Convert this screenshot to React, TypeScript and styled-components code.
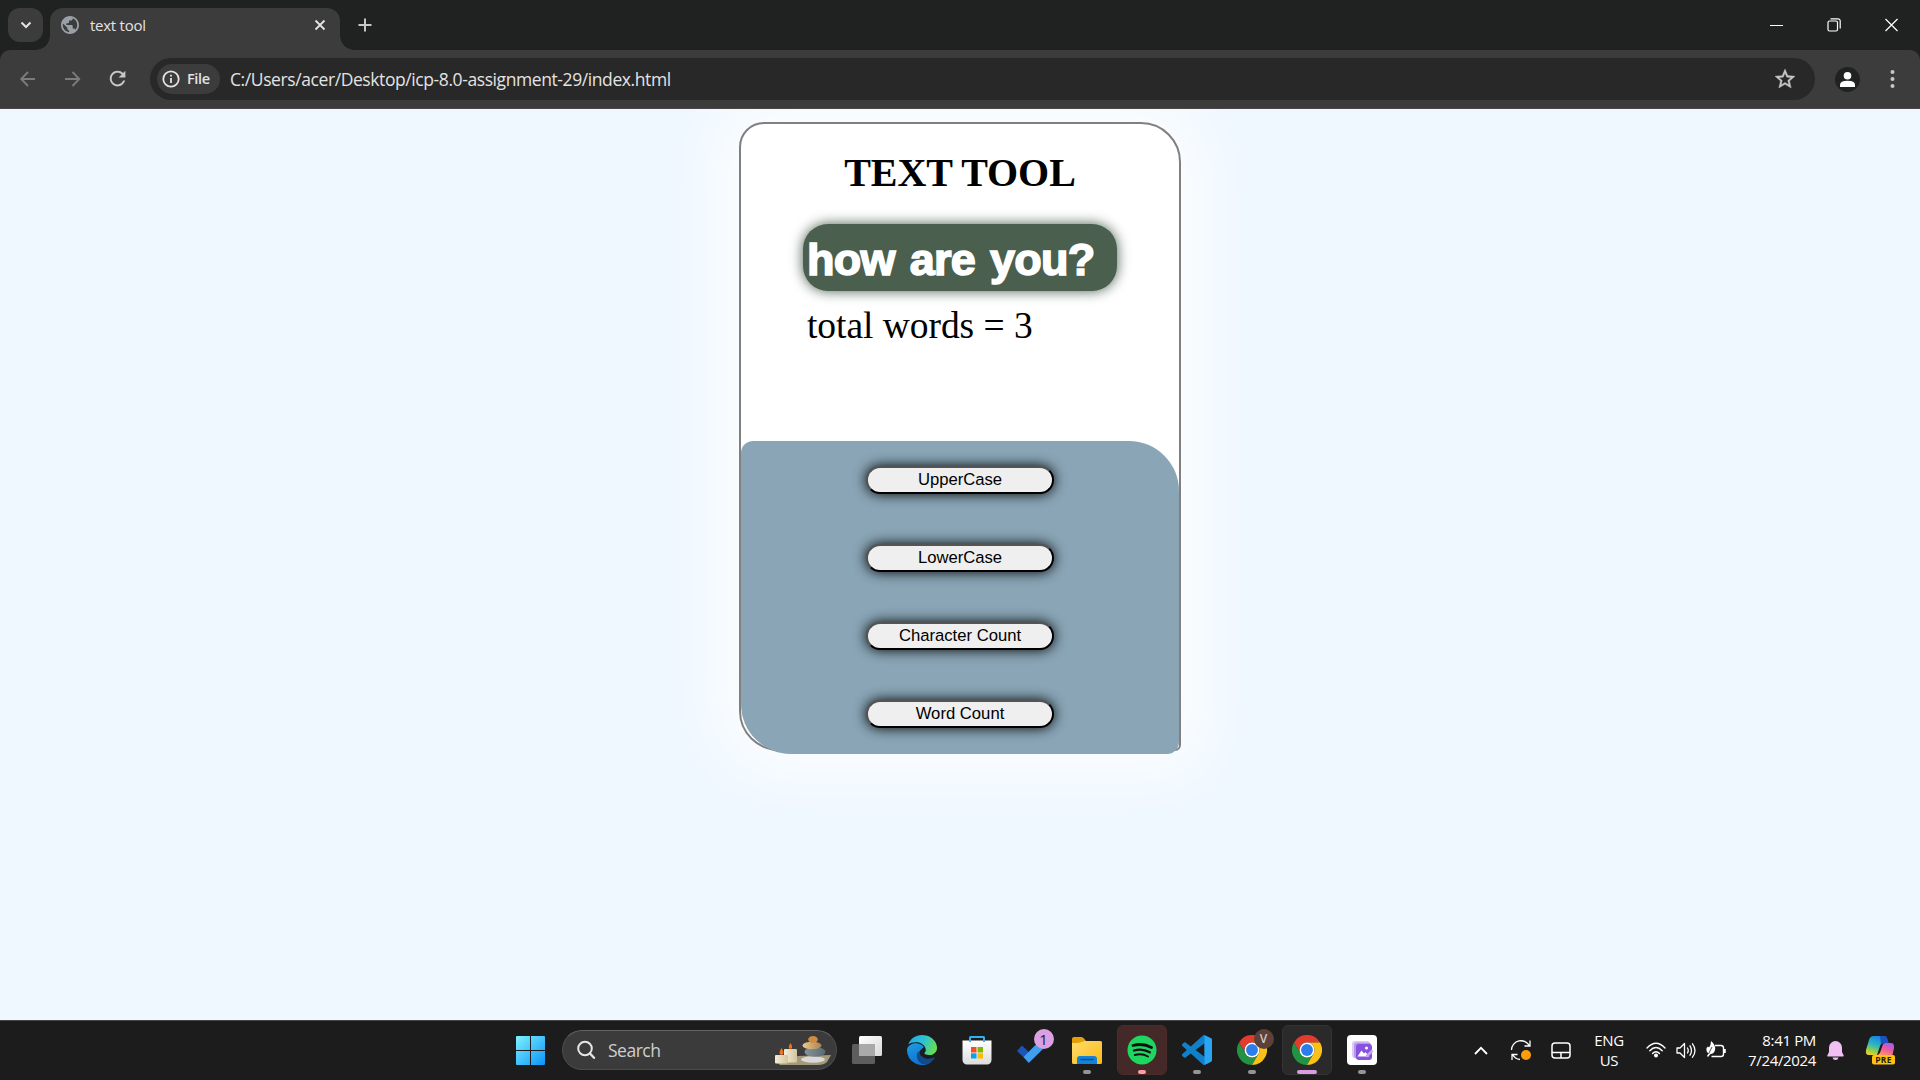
import React from "react";
import styled, { createGlobalStyle } from "styled-components";

const UI_FONT = '"Open Sans", "Noto Sans", sans-serif';

const GlobalStyle = createGlobalStyle`
  * { box-sizing: border-box; }
  body { margin: 0; overflow: hidden; background: #1c1c1c; }
`;

const Screen = styled.div`
  width: 1920px;
  height: 1080px;
  display: flex;
  flex-direction: column;
  overflow: hidden;
  font-family: ${UI_FONT};
`;

/* ---------- Browser frame ---------- */

const TabStrip = styled.div`
  height: 50px;
  flex: none;
  display: flex;
  align-items: flex-start;
  background: #202221;
  padding: 8px 0 0 8px;
`;

const TabSearch = styled.button`
  width: 35px;
  height: 34px;
  padding: 0;
  border: 0;
  border-radius: 12px;
  background: #3c3c3c;
  display: grid;
  place-items: center;
  margin-right: 7px;
`;

const Tab = styled.div`
  position: relative;
  width: 290px;
  height: 42px;
  border-radius: 13px 13px 0 0;
  background: #3c3c3c;
  display: flex;
  align-items: center;
  padding: 0 14px 8px 11px;
  &::before,
  &::after {
    content: "";
    position: absolute;
    bottom: 0;
    width: 14px;
    height: 14px;
  }
  &::before {
    left: -14px;
    background: radial-gradient(circle at 0 0, transparent 13.5px, #3c3c3c 14px);
  }
  &::after {
    right: -14px;
    background: radial-gradient(circle at 100% 0, transparent 13.5px, #3c3c3c 14px);
  }
`;

const TabTitle = styled.span`
  flex: 1;
  margin-left: 11px;
  font-size: 15px;
  line-height: 20px;
  letter-spacing: -0.25px;
  color: #e3e3e3;
`;

const NewTab = styled.div`
  width: 20px;
  height: 34px;
  margin-left: 15px;
  display: grid;
  place-items: center;
`;

const WindowControls = styled.div`
  margin-left: auto;
  display: flex;
  height: 33px;
  align-items: center;
  gap: 44px;
  padding-right: 22px;
  svg { display: block; }
`;

const Toolbar = styled.div`
  height: 59px;
  flex: none;
  display: flex;
  align-items: center;
  background: linear-gradient(#202221 0 12px, transparent 12px);
  background-color: #3c3c3c;
`;

const ToolbarFace = styled.div`
  flex: 1;
  height: 59px;
  display: flex;
  align-items: center;
  border-radius: 10px 10px 0 0;
  background: #3c3c3c;
  border-bottom: 1px solid #4c4644;
  padding: 0 19px 0 17px;
`;

const NavButtons = styled.div`
  width: 133px;
  display: flex;
  gap: 23px;
`;

const NavIcon = styled.svg`
  width: 22px;
  height: 22px;
  display: block;
`;

const AddressBar = styled.div`
  width: 1665px;
  height: 42px;
  border-radius: 21px;
  background: #282828;
  display: flex;
  align-items: center;
  padding: 0 19px 0 7px;
`;

const FileChip = styled.div`
  width: 63px;
  height: 30px;
  border-radius: 15px;
  background: #3c3c3c;
  display: flex;
  align-items: center;
  gap: 7px;
  padding: 0 0 1px 5px;
  font-size: 14.5px;
  font-weight: 600;
  letter-spacing: -0.35px;
  color: #e3e3e3;
`;

const Url = styled.span`
  flex: 1;
  margin-left: 10px;
  font-size: 17.5px;
  line-height: 24px;
  letter-spacing: -0.41px;
  color: #e3e3e3;
  white-space: nowrap;
`;

const Profile = styled.svg`
  width: 25px;
  height: 25px;
  margin: 0 30px 0 20px;
`;

/* ---------- Page ---------- */

const Page = styled.main`
  height: 911px;
  flex: none;
  background: #f0f8ff;
  padding-top: 13px;
  overflow: hidden;
`;

const Card = styled.section`
  width: 442px;
  height: 629px;
  margin: 0 auto;
  background: #fff;
  border: 2px solid #808080;
  border-radius: 25px 40px 6px 40px;
  box-shadow: 0 0 62px 12px #fff;
  display: flex;
  flex-direction: column;
  align-items: center;
`;

const Heading = styled.h1`
  margin: 26px 0 0;
  font: bold 40px/46px "Liberation Serif", serif;
  letter-spacing: -0.1px;
  color: #000;
`;

const Field = styled.div`
  width: 314px;
  height: 67px;
  margin-top: 28px;
  flex: none;
  border-radius: 25px;
  background: #4a5f4e;
  box-shadow: 0 0 12.5px #4a5f4e;
  padding-left: 4px;
  font: bold 45px/71px "Liberation Sans", sans-serif;
  letter-spacing: -0.7px;
  word-spacing: 3px;
  -webkit-text-stroke: 1.6px #fff;
  color: #fff;
  white-space: nowrap;
`;

const Result = styled.div`
  width: 306px;
  height: 150px;
  flex: none;
  padding-top: 13px;
  font: 37.5px/43px "Liberation Serif", serif;
  letter-spacing: -0.05px;
  color: #000;
`;

const ButtonPanel = styled.div`
  width: 438px;
  height: 313px;
  flex: none;
  border-radius: 12px 50px 12px 50px;
  background: #89a5b6;
  display: flex;
  flex-direction: column;
  align-items: center;
  gap: 50.1px;
  padding-top: 25px;
`;

const ActionButton = styled.button`
  width: 188px;
  height: 28px;
  flex: none;
  padding: 0;
  border: 2px outset #000;
  border-radius: 14px;
  background: #efefef;
  box-shadow: 0 0 12.5px #000;
  font: 16.67px/22px "Liberation Sans", Arial, sans-serif;
  color: #000;
`;

/* ---------- Taskbar ---------- */

const Taskbar = styled.footer`
  height: 60px;
  flex: none;
  display: flex;
  align-items: flex-start;
  background: #1c1c1c;
  border-top: 1px solid #454747;
  padding-left: 503px;
`;

const AppCell = styled.div`
  position: relative;
  width: 55px;
  height: 58px;
  flex: none;
  display: grid;
  place-items: center;
  svg { display: block; }
`;

const AppTile = styled.div<{ $bg?: string; $edge?: string }>`
  width: 50px;
  height: 50px;
  border-radius: 6px;
  border: 1px solid ${(p) => p.$edge ?? "transparent"};
  background: ${(p) => p.$bg ?? "transparent"};
  display: grid;
  place-items: center;
`;

const Indicator = styled.span<{ $w: number; $color: string }>`
  position: absolute;
  left: 50%;
  bottom: 5px;
  width: ${(p) => p.$w}px;
  height: 4px;
  margin-left: ${(p) => -p.$w / 2}px;
  border-radius: 2px;
  background: ${(p) => p.$color};
`;

const Badge = styled.span<{ $bg: string; $fg: string; $weight: number; $size: number }>`
  position: absolute;
  right: 6px;
  top: 8px;
  width: 20px;
  height: 20px;
  border-radius: 50%;
  background: ${(p) => p.$bg};
  color: ${(p) => p.$fg};
  font: ${(p) => p.$weight} ${(p) => p.$size}px/20px ${UI_FONT};
  text-align: center;
`;

const SearchBox = styled.div`
  width: 275px;
  height: 40px;
  margin: 9px 2.5px 0 4px;
  border-radius: 20px;
  background: #3b3b3b;
  border: 1px solid #4c4c4c;
  border-top-color: #636363;
  display: flex;
  align-items: center;
  padding: 0 4px 0 13px;
  overflow: hidden;
  color: #cfcfcf;
  font-size: 17.5px;
  letter-spacing: -0.5px;
`;

const SearchLabel = styled.span`
  flex: 1;
  margin-left: 12px;
  line-height: 24px;
`;

const Tray = styled.div`
  margin-left: auto;
  display: flex;
  align-items: center;
  height: 58px;
  padding-right: 14px;
  svg { display: block; flex: none; }
`;

const TraySlot = styled.div<{ $w: number }>`
  width: ${(p) => p.$w}px;
  flex: none;
  display: grid;
  place-items: center;
`;

const TwoLines = styled.div<{ $w: number; $align: string; $ls: number }>`
  width: ${(p) => p.$w}px;
  text-align: ${(p) => p.$align};
  font-size: 15px;
  line-height: 20px;
  letter-spacing: ${(p) => p.$ls}px;
  color: #fff;
  white-space: nowrap;
`;

/* ---------- App icons ---------- */

const StartIcon = () => (
  <svg width="29" height="29" viewBox="0 0 29 29">
    <defs>
      <linearGradient id="win" x1="0" y1="0" x2="1" y2="1">
        <stop offset="0" stopColor="#7df2ff" />
        <stop offset="1" stopColor="#0a93f8" />
      </linearGradient>
    </defs>
    <path fill="url(#win)" d="M1 0H14V14H0V1a1 1 0 0 1 1-1zM15 0H28a1 1 0 0 1 1 1V14H15zM0 15H14V29H1a1 1 0 0 1-1-1zM15 15H29V28a1 1 0 0 1-1 1H15z" />
  </svg>
);

const SearchArt = () => (
  <svg width="58" height="34" viewBox="0 0 58 34">
    <defs>
      <linearGradient id="wax" x1="0" x2="1">
        <stop offset="0" stopColor="#f5ecd6" />
        <stop offset="1" stopColor="#d3c49f" />
      </linearGradient>
      <linearGradient id="stone" x1="0" x2="1">
        <stop offset="0" stopColor="#ecc98d" />
        <stop offset="1" stopColor="#a68352" />
      </linearGradient>
      <linearGradient id="slate" x1="0" x2="1">
        <stop offset="0" stopColor="#82949a" />
        <stop offset="1" stopColor="#5b6a70" />
      </linearGradient>
    </defs>
    <path d="M3 29 L24 23 L57 22 L53 29 Q50 32 44 32 L6 32 Z" fill="#a39a7a" />
    <rect x="10" y="16" width="13" height="13.500" rx="1" fill="url(#wax)" />
    <rect x="1" y="22" width="13" height="8.500" rx="1" fill="url(#wax)" />
    <path d="M16.500 10 q-3.500 5 0 6 q3.500-1 0-6zM7.500 15 q-4 6 0 7 q4-1 0-7z" fill="#f0711f" />
    <ellipse cx="39" cy="26.500" rx="12" ry="3.300" fill="#d8d8da" />
    <ellipse cx="41" cy="19" rx="10.500" ry="4.800" fill="url(#slate)" />
    <ellipse cx="38" cy="12.500" rx="9.500" ry="3.800" fill="url(#stone)" />
    <ellipse cx="39" cy="6.500" rx="4.800" ry="3.500" fill="#cf8b3f" />
  </svg>
);

const TaskViewIcon = () => (
  <svg width="30" height="28" viewBox="0 0 30 28">
    <defs>
      <linearGradient id="tv" x1="0" y1="0" x2="1" y2="1">
        <stop offset="0" stopColor="#fff" />
        <stop offset="1" stopColor="#d9d9d9" />
      </linearGradient>
    </defs>
    <rect x="0" y="8" width="23" height="20" rx="1.500" fill="#5d5d5d" />
    <rect x="7" y="0" width="23" height="20" rx="1.500" fill="url(#tv)" />
    <path d="M7 8H23V20H7z" fill="#a9a9a9" />
  </svg>
);

const EdgeIcon = () => (
  <svg width="30" height="30" viewBox="0 0 24 24">
    <defs>
      <linearGradient id="e1" x1="0" y1="0.3" x2="1" y2="0.6">
        <stop offset="0" stopColor="#27a8ea" />
        <stop offset="0.5" stopColor="#2cc3d0" />
        <stop offset="1" stopColor="#6be04c" />
      </linearGradient>
      <linearGradient id="e2" x1="0" y1="0" x2="0.5" y2="1">
        <stop offset="0" stopColor="#1e9de3" />
        <stop offset="1" stopColor="#0f6fd0" />
      </linearGradient>
    </defs>
    <path fill="url(#e2)" d="M.1 11C2 6 10 5 13.500 9.500L10 13C9 18 15 22 20 20.900A12 12 0 0 1 0 12z" />
    <path fill="#114a8b" d="M21.860 17.860q.14 0 .25.12.1.13.1.25t-.11.33l-.32.46-.43.53-.44.5q-.26.25-.38.37l-.22.23q-.58.53-1.340 1.040-.76.51-1.600.91-.86.4-1.740.64t-1.670.24q-.9 0-1.690-.28-.8-.28-1.480-.78-.68-.5-1.220-1.170-.53-.66-.92-1.440-.38-.77-.58-1.600-.2-.83-.2-1.670 0-1 .32-1.960.33-.97.87-1.800.14.95.55 1.770.41.82 1.020 1.500.6.68 1.380 1.210.78.54 1.640.9.86.36 1.770.56.92.2 1.800.2 1.120 0 2.180-.24 1.060-.23 2.060-.72l.2-.1.2-.05z" />
    <path fill="url(#e1)" d="M11.960.06q1.700 0 3.330.39 1.630.38 3.070 1.150 1.430.77 2.620 1.930 1.180 1.160 1.980 2.700.49.94.76 1.960.28 1 .28 2.080 0 .89-.23 1.700-.24.8-.69 1.480-.45.68-1.100 1.220-.64.53-1.450.88-.54.24-1.110.36-.58.13-1.160.13-.42 0-.97-.03-.54-.03-1.100-.12-.55-.1-1.050-.28-.5-.19-.84-.5-.12-.09-.23-.24-.1-.16-.1-.33 0-.15.16-.35.16-.2.35-.5.2-.28.36-.68.16-.4.16-.95 0-1.060-.4-1.960-.4-.91-1.060-1.640-.66-.74-1.520-1.280-.86-.55-1.790-.89-.84-.3-1.720-.44-.87-.14-1.760-.14-1.550 0-3.060.45T.94 7.550q.71-1.740 1.810-3.130 1.100-1.380 2.520-2.350Q6.680 1.100 8.370.58q1.700-.52 3.580-.52Z" />
  </svg>
);

const StoreIcon = () => (
  <svg width="30" height="30" viewBox="0 0 30 30">
    <defs>
      <linearGradient id="bag" x1="0" y1="0" x2="0" y2="1">
        <stop offset="0" stopColor="#fff" />
        <stop offset="1" stopColor="#dcdcdc" />
      </linearGradient>
    </defs>
    <path d="M0.500 5.500H29.500V25a4.500 4.500 0 0 1-4.500 4.500H5A4.500 4.500 0 0 1 .5 25z" fill="url(#bag)" />
    <path d="M8 7V2.500Q8 2 8.500 2H21.500Q22 2 22 2.500V7" fill="none" stroke="#2db4ee" strokeWidth="2" />
    <path fill="#f25022" d="M9 12h5.500v5.500H9z" />
    <path fill="#7fba00" d="M15.500 12H21v5.500h-5.500z" />
    <path fill="#00a4ef" d="M9 18.300h5.500V23.500H9z" />
    <path fill="#ffb900" d="M15.500 18.300H21V23.500h-5.500z" />
  </svg>
);

const TodoIcon = () => (
  <svg width="30" height="30" viewBox="0 0 30 30">
    <path d="M0 16 5 10.500 15.500 20.500 11.500 27z" fill="#1b55b8" />
    <path d="M6.500 22 24 4.500 30 10 11.800 28z" fill="#3f9fee" />
  </svg>
);

const ExplorerIcon = () => (
  <svg width="30" height="27" viewBox="0 0 30 27">
    <defs>
      <linearGradient id="fold" x1="0" y1="0" x2="1" y2="1">
        <stop offset="0" stopColor="#ffdd6e" />
        <stop offset="1" stopColor="#fbb915" />
      </linearGradient>
    </defs>
    <path d="M0 2Q0 0 2 0H9.500Q11 0 12 1.500L14 4V9H0z" fill="#e2a006" />
    <path d="M0 6Q7 6.200 9.500 5 12 4 14 4H28.500Q30 4 30 5.500V25.500Q30 27 28.500 27H1.500Q0 27 0 25.500z" fill="url(#fold)" />
    <path d="M5 27V22a3 3 0 0 1 3-3H22a3 3 0 0 1 3 3V27z" fill="#1482d8" />
    <path d="M9 22.500H21" stroke="#0b4d91" strokeWidth="1.500" strokeLinecap="round" />
  </svg>
);

const SpotifyIcon = () => (
  <svg width="30" height="30" viewBox="0 0 30 30">
    <circle cx="15" cy="15" r="14.500" fill="#1ed760" />
    <g fill="none" stroke="#101010" strokeLinecap="round">
      <path d="M6 10.500Q16 7.800 24.500 12.500" strokeWidth="2.800" />
      <path d="M7 15.500Q15.500 13 22.800 17.300" strokeWidth="2.300" />
      <path d="M7.800 20Q15 18 21 21.500" strokeWidth="1.900" />
    </g>
  </svg>
);

const CodeIcon = () => (
  <svg width="30" height="30" viewBox="0 0 24 24">
    <path fill="#1080c9" d="M23.150 2.587L18.210.21a1.494 1.494 0 0 0-1.705.29l-9.460 8.630-4.120-3.128a.999.999 0 0 0-1.276.057L.327 7.261A1 1 0 0 0 .326 8.740L3.899 12 .326 15.260a1 1 0 0 0 .001 1.479L1.650 17.940a.999.999 0 0 0 1.276.057l4.120-3.128 9.460 8.630a1.492 1.492 0 0 0 1.704.29l4.942-2.377A1.500 1.500 0 0 0 24 20.060V3.939a1.500 1.500 0 0 0-.85-1.352zm-5.146 14.861L10.826 12l7.178-5.448v10.896z" />
    <path fill="#2aa5f2" d="M18 .1 23.150 2.587A1.500 1.500 0 0 1 24 3.939V20.060a1.500 1.500 0 0 1-.85 1.352L18 23.900z" />
  </svg>
);

const ChromeIcon = () => (
  <svg width="30" height="30" viewBox="0 0 48 48">
    <path fill="#e33b2e" d="M24 12H44.800A24 24 0 0 0 3.200 12L13.600 30A12 12 0 0 1 24 12z" />
    <path fill="#229342" d="M13.600 30 3.200 12A24 24 0 0 0 24 48L34.400 30A12 12 0 0 1 13.600 30z" />
    <path fill="#fbc116" d="M34.400 30 24 48A24 24 0 0 0 44.800 12H24A12 12 0 0 1 34.400 30z" />
    <circle cx="24" cy="24" r="12" fill="#fff" />
    <circle cx="24" cy="24" r="9.500" fill="#2b7de9" />
  </svg>
);

const PhotoIcon = () => (
  <svg width="30" height="30" viewBox="0 0 30 30">
    <rect width="30" height="30" rx="4" fill="#fff" />
    <rect x="5" y="6" width="18" height="17" rx="3" fill="#dccbf5" />
    <rect x="7" y="7.500" width="17" height="16" rx="3" fill="#b796ea" />
    <rect x="9" y="9" width="16" height="16" rx="3" fill="#8753dc" />
    <path d="M10.500 21.500 14.500 15.500 17 18.500 18.500 17 22 21.500z" fill="#fff" />
    <circle cx="19.500" cy="13" r="1.500" fill="#fff" />
    <path d="M19.500 21.500 25.500 15.500" stroke="#c6a6f3" strokeWidth="2.500" />
  </svg>
);

const CopilotIcon = () => (
  <svg width="30" height="30" viewBox="0 0 30 30">
    <defs>
      <linearGradient id="cpa" x1="0.6" y1="0" x2="0.2" y2="1">
        <stop offset="0" stopColor="#1a7ee6" />
        <stop offset="0.45" stopColor="#25b5c4" />
        <stop offset="0.75" stopColor="#8ccb5a" />
        <stop offset="1" stopColor="#f2d21e" />
      </linearGradient>
      <linearGradient id="cpb" x1="0.7" y1="0" x2="0.2" y2="1">
        <stop offset="0" stopColor="#a45cf0" />
        <stop offset="0.5" stopColor="#ee5c9a" />
        <stop offset="1" stopColor="#ff9a5a" />
      </linearGradient>
    </defs>
    <path d="M9 1H19Q22 1 22.500 5L23.500 8H19Q16 8 15 11L12 20H4Q0 20 1 15L4 5Q5 1 9 1z" fill="url(#cpa)" />
    <path d="M15 1H19Q22 1 22.500 5L23.500 8H19Q17 8 16 9.500z" fill="#1c50c4" />
    <path d="M20 8H26Q29.500 8 29 13L27.500 20H12.500Q15 19 16 15L17.500 10.500Q18 8 20 8z" fill="url(#cpb)" />
    <rect x="7" y="20" width="23" height="9.500" rx="2" fill="#ffc20e" />
    <text x="18.500" y="27.800" textAnchor="middle" fontFamily="Open Sans, sans-serif" fontWeight="700" fontSize="8.500" letterSpacing="0.3" fill="#1c1c1c">PRE</text>
  </svg>
);

/* ---------- Data ---------- */

type AppEntry = {
  name: string;
  icon: React.ReactNode;
  bg?: string;
  edge?: string;
  dot?: { w: number; color: string };
  badge?: { text: string; bg: string; fg: string; weight: number; size: number };
};

const GREY_DOT = { w: 8, color: "#949494" };

const apps: AppEntry[] = [
  { name: "taskview", icon: <TaskViewIcon /> },
  { name: "edge", icon: <EdgeIcon /> },
  { name: "store", icon: <StoreIcon /> },
  { name: "todo", icon: <TodoIcon />, badge: { text: "1", bg: "#dc9fe2", fg: "#2a1c2c", weight: 400, size: 15 } },
  { name: "explorer", icon: <ExplorerIcon />, dot: GREY_DOT },
  { name: "spotify", icon: <SpotifyIcon />, bg: "#452929", edge: "#4c2b2b", dot: { w: 8, color: "#ff9ca4" } },
  { name: "code", icon: <CodeIcon />, dot: GREY_DOT },
  { name: "chrome-v", icon: <ChromeIcon />, dot: GREY_DOT, badge: { text: "V", bg: "#5d4037", fg: "#d4c9c5", weight: 600, size: 12 } },
  { name: "chrome", icon: <ChromeIcon />, bg: "#2a2a2a", edge: "#343434", dot: { w: 20, color: "#d99ce0" } },
  { name: "photo", icon: <PhotoIcon />, dot: GREY_DOT },
];

const actions = ["UpperCase", "LowerCase", "Character Count", "Word Count"];

export default function App() {
  return (
    <Screen>
      <GlobalStyle />
      <TabStrip>
        <TabSearch>
          <svg width="12" height="8" viewBox="0 0 12 8"><path d="M1.500 1.500 6 6 10.500 1.500" fill="none" stroke="#e3e3e3" strokeWidth="2" /></svg>
        </TabSearch>
        <Tab>
          <svg width="18" height="18" viewBox="2 2 20 20" fill="#9aa0a8"><path d="M12 2C6.480 2 2 6.480 2 12s4.480 10 10 10 10-4.480 10-10S17.520 2 12 2zm-1 17.930c-3.950-.49-7-3.850-7-7.930 0-.62.08-1.210.21-1.790L9 15v1c0 1.100.9 2 2 2v1.930zm6.900-2.540c-.26-.81-1-1.390-1.900-1.390h-1v-3c0-.55-.45-1-1-1H8v-2h2c.55 0 1-.45 1-1V7h2c1.100 0 2-.9 2-2v-.41c2.930 1.190 5 4.060 5 7.410 0 2.080-.8 3.970-2.100 5.390z" /></svg>
          <TabTitle>text tool</TabTitle>
          <svg width="12" height="12" viewBox="0 0 12 12"><path d="M1.500 1.500 10.500 10.500M10.500 1.500 1.500 10.500" stroke="#e3e3e3" strokeWidth="1.800" /></svg>
        </Tab>
        <NewTab>
          <svg width="14" height="14" viewBox="0 0 14 14"><path d="M7 .5V13.500M.5 7H13.500" stroke="#c7c7c7" strokeWidth="2" /></svg>
        </NewTab>
        <WindowControls>
          <svg width="13" height="14" viewBox="0 0 13 14"><path d="M0 7.500H13" stroke="#fff" /></svg>
          <svg width="14" height="14" viewBox="0 0 14 14" fill="none" stroke="#fff"><rect x="1" y="3" width="9.500" height="10" rx="1.500" strokeWidth="1.200" /><path d="M3.500 .8H11a2.200 2.200 0 0 1 2.200 2.200V10.500" strokeWidth="1.200" /></svg>
          <svg width="13" height="14" viewBox="0 0 13 14"><path d="M.5 1 12.500 13M12.500 1 .5 13" stroke="#fff" strokeWidth="1.200" /></svg>
        </WindowControls>
      </TabStrip>

      <Toolbar>
        <ToolbarFace>
          <NavButtons>
            <NavIcon viewBox="0 0 22 22" fill="none" stroke="#7c7c7c" strokeWidth="1.800"><path d="M18 11H4.500M11 4 4.200 11 11 18" /></NavIcon>
            <NavIcon viewBox="0 0 22 22" fill="none" stroke="#7c7c7c" strokeWidth="1.800"><path d="M3 11H17M10.500 4 17.300 11 10.500 18" /></NavIcon>
            <NavIcon viewBox="1.200 1.200 22.500 22.500" fill="#c7c7c7"><path d="M17.650 6.350C16.200 4.900 14.210 4 12 4c-4.420 0-7.990 3.580-7.990 8s3.570 8 7.990 8c3.730 0 6.840-2.550 7.730-6h-2.080c-.82 2.330-3.040 4-5.650 4-3.310 0-6-2.690-6-6s2.690-6 6-6c1.660 0 3.140.69 4.220 1.780L13 11h7V4l-2.350 2.350z" /></NavIcon>
          </NavButtons>
          <AddressBar>
            <FileChip>
              <svg width="18" height="18" viewBox="0 0 18 18"><circle cx="9" cy="9" r="7.700" fill="none" stroke="#e3e3e3" strokeWidth="1.800" /><path d="M9 8V13M9 4.800V6.600" stroke="#e3e3e3" strokeWidth="1.800" /></svg>
              File
            </FileChip>
            <Url>C:/Users/acer/Desktop/icp-8.0-assignment-29/index.html</Url>
            <svg width="22" height="22" viewBox="1 1 22 22" fill="#c7c7c7" stroke="#c7c7c7" strokeWidth="0.4"><path d="M22 9.240l-7.190-.62L12 2 9.190 8.630 2 9.240l5.460 4.730L5.820 21 12 17.270 18.180 21l-1.630-7.030L22 9.240zM12 15.400l-3.760 2.270 1-4.280-3.320-2.880 4.380-.38L12 6.100l1.710 4.040 4.380.38-3.320 2.880 1 4.280L12 15.400z" /></svg>
          </AddressBar>
          <Profile viewBox="0 0 25 25">
            <circle cx="12.500" cy="12.500" r="12.500" fill="#202221" />
            <circle cx="12.500" cy="8.700" r="3.800" fill="#fff" />
            <path d="M5 20V18Q5 13.800 12.500 13.800T20 18V20z" fill="#fff" />
          </Profile>
          <svg width="5" height="20" viewBox="0 0 5 20" fill="#c7c7c7"><circle cx="2.500" cy="3" r="2" /><circle cx="2.500" cy="10" r="2" /><circle cx="2.500" cy="17" r="2" /></svg>
        </ToolbarFace>
      </Toolbar>

      <Page>
        <Card>
          <Heading>TEXT TOOL</Heading>
          <Field>how are you?</Field>
          <Result>total words = 3</Result>
          <ButtonPanel>
            {actions.map((label) => (
              <ActionButton key={label}>{label}</ActionButton>
            ))}
          </ButtonPanel>
        </Card>
      </Page>

      <Taskbar>
        <AppCell><StartIcon /></AppCell>
        <SearchBox>
          <svg width="20" height="20" viewBox="0 0 20 20" fill="none" stroke="#e6e6e6" strokeLinecap="round"><circle cx="9" cy="8.500" r="6.800" strokeWidth="2" /><path d="M14 13.500 18 17.800" strokeWidth="2.400" /></svg>
          <SearchLabel>Search</SearchLabel>
          <SearchArt />
        </SearchBox>
        {apps.map((app) => (
          <AppCell key={app.name}>
            <AppTile $bg={app.bg} $edge={app.edge}>{app.icon}</AppTile>
            {app.dot && <Indicator $w={app.dot.w} $color={app.dot.color} />}
            {app.badge && (
              <Badge $bg={app.badge.bg} $fg={app.badge.fg} $weight={app.badge.weight} $size={app.badge.size}>
                {app.badge.text}
              </Badge>
            )}
          </AppCell>
        ))}
        <Tray>
          <TraySlot $w={40}>
            <svg width="14" height="9" viewBox="0 0 14 9"><path d="M1 8 7 1.800 13 8" fill="none" stroke="#fff" strokeWidth="1.800" /></svg>
          </TraySlot>
          <TraySlot $w={40}>
            <svg width="22" height="22" viewBox="0 0 22 22" fill="none" stroke="#fff" strokeWidth="1.300">
              <path d="M1.500 11A9.500 9.500 0 0 1 19.500 7M20 1.500V7H14.500M10 20.500Q5 20 2.500 15.500M2 21V15.500H7.500" />
              <circle cx="16" cy="16" r="5" fill="#ff9d0a" stroke="none" />
            </svg>
          </TraySlot>
          <TraySlot $w={39}>
            <svg width="20" height="17" viewBox="0 0 20 17" fill="none" stroke="#fff" strokeWidth="1.500"><rect x="1" y="1" width="18" height="15" rx="3" /><path d="M1 10.500H19M10 10.500V16" /></svg>
          </TraySlot>
          <TwoLines $w={58} $align="center" $ls={-0.3}>ENG<br />US</TwoLines>
          <TraySlot $w={36}>
            <svg width="20" height="16" viewBox="0 0 20 16" fill="none" stroke="#fff" strokeWidth="1.400" strokeLinecap="round">
              <path d="M1 6Q10-3.500 19 6M3.800 8.800Q10 2.300 16.200 8.800M6.500 11.500Q10 8 13.500 11.500" />
              <circle cx="10" cy="13.500" r="1.300" fill="#fff" />
            </svg>
          </TraySlot>
          <TraySlot $w={24}>
            <svg width="20" height="17" viewBox="0 0 20 17" fill="none" stroke="#fff" strokeWidth="1.300" strokeLinecap="round" strokeLinejoin="round">
              <path d="M1 6H4L8.500 1.500V15.500L4 11H1zM11.500 6Q13 8.500 11.500 11M14 3.800Q17 8.500 14 13.200M16.500 1.800Q21.500 8.500 16.500 15.200" />
            </svg>
          </TraySlot>
          <TraySlot $w={36}>
            <svg width="20" height="18" viewBox="0 0 20 18">
              <path d="M9 4.500H15a2.500 2.500 0 0 1 2.500 2.500V13A2.500 2.500 0 0 1 15 15.500H5.500" fill="none" stroke="#fff" strokeWidth="1.400" />
              <path d="M18 8H19.800V12H18z" fill="#fff" />
              <path d="M5 0Q10 4 9 9 8 13 4.500 13L2 16 1 15 2.500 12.500Q0 11 .5 7L2 5.500 3 6.500Q5 4 5 0z" fill="#fff" />
              <path d="M2.500 13 6 6" stroke="#1c1c1c" strokeWidth="0.800" />
            </svg>
          </TraySlot>
          <TwoLines $w={82} $align="right" $ls={-0.35}>8:41 PM<br />7/24/2024</TwoLines>
          <TraySlot $w={38}>
            <svg width="17" height="19" viewBox="0 0 17 19" fill="#f0bff4"><path d="M8.500 0A6.500 6.500 0 0 1 15 6.500V11L16.700 14.500Q17 15.500 16 15.500H1Q0 15.500 .3 14.500L2 11V6.500A6.500 6.500 0 0 1 8.500 0zM5.500 16.500H11.500Q11 19 8.500 19T5.500 16.500z" /></svg>
          </TraySlot>
          <TraySlot $w={52}><CopilotIcon /></TraySlot>
        </Tray>
      </Taskbar>
    </Screen>
  );
}
